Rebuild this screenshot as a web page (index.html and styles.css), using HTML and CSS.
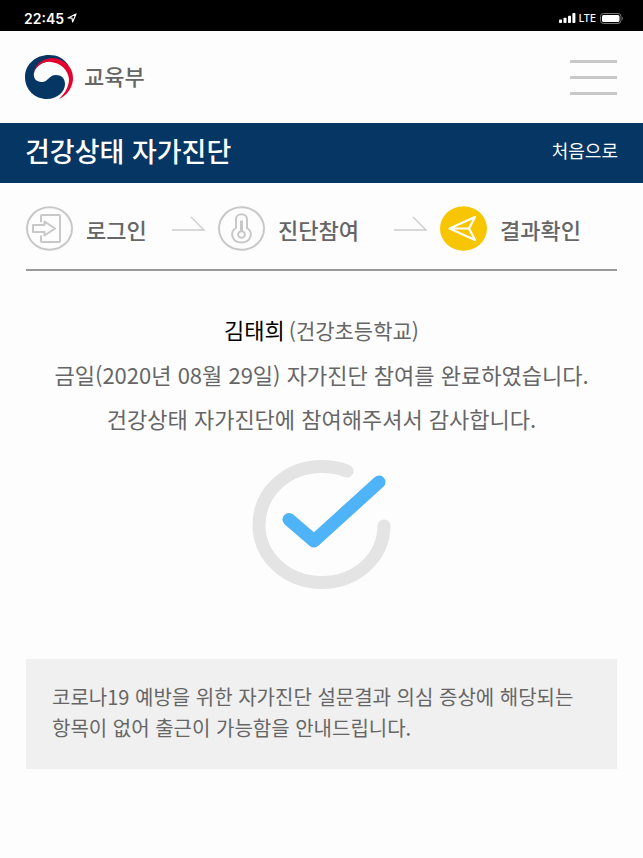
FILE: index.html
```html
<!DOCTYPE html>
<html lang="ko">
<head>
  <meta charset="UTF-8" />
  <meta name="viewport" content="width=device-width, initial-scale=1" />
  <title>건강상태 자가진단</title>
  <link rel="stylesheet" href="styles.css">
</head>
<body>

  <!-- Status bar -->
  <div class="status-bar">
    <span class="clock">22:45</span>
    <svg class="location" width="10" height="10" viewBox="0 0 10 10">
      <path d="M1 5 L9 1 L5.6 9 L5 5.2 Z" fill="none" stroke="#fff" stroke-width="1.2" stroke-linejoin="round"/>
    </svg>
    <svg class="signal" width="17" height="10" viewBox="0 0 17 10" fill="#fff">
      <rect x="0" y="6.5" width="3" height="3.5" rx="0.8"/>
      <rect x="4.5" y="4.8" width="3" height="5.2" rx="0.8"/>
      <rect x="9" y="2.8" width="3" height="7.2" rx="0.8"/>
      <rect x="13.4" y="0" width="3" height="10" rx="0.8"/>
    </svg>
    <span class="network">LTE</span>
    <svg width="24" height="11" viewBox="0 0 24 11">
      <rect x="0.5" y="0.5" width="20.5" height="10" rx="3" fill="none" stroke="#777"/>
      <rect x="2" y="2" width="17.5" height="7" rx="1.6" fill="#fff"/>
      <path d="M22.2 3.6 Q24 5.5 22.2 7.4 Z" fill="#777"/>
    </svg>
  </div>

  <header class="site-header">
    <a class="logo" href="#">
      <svg width="49" height="45" viewBox="0 0 49 45">
        <path d="M44 11 C39 3 32 0 24 0 C11 0 0 9 0 22 C0 35 10 44 22 44 C32 44 40 37 40 29 C40 23 36 20 31 20 C24 20 23 27 17 27 C11 27 8 23 9 18 C11 7 29 1 44 11 Z" fill="#063663"/>
        <path d="M9 17 C11 8 19 3 28 3 C40 4 49 13 48 25 C47 34 41 41 34 44 C41 37 44 31 44 24 C43 15 36 8 26 7 C19 6 12 10 9 17 Z" fill="#e4032e"/>
      </svg>
      <span>교육부</span>
    </a>
    <button class="menu-btn" type="button" aria-label="메뉴">
      <span></span><span></span><span></span>
    </button>
  </header>

  <div class="title-bar">
    <h1>건강상태 자가진단</h1>
    <a href="#">처음으로</a>
  </div>

  <main>
    <ol class="steps">
      <li>
        <svg class="step-icon" width="47" height="45" viewBox="0 0 47 45" fill="none" stroke="#c8c8c8" stroke-width="2">
          <ellipse cx="23.5" cy="22.5" rx="22.5" ry="21.3"/>
          <path d="M15 16 V9.5 Q15 9 16 9 H33 Q34 9 34 10 V35 Q34 36 33 36 H16 Q15 36 15 35 V29.5"/>
          <path d="M7 19 H18.5 V15.5 L29 22.5 L18.5 29.5 V26 H7 Z" stroke-linejoin="round"/>
        </svg>
        <span>로그인</span>
        <svg class="arrow" width="34" height="15" viewBox="0 0 34 15" fill="none" stroke="#ccc" stroke-width="1.4">
          <path d="M0 14 H32 L19 1"/>
        </svg>
      </li>
      <li>
        <svg class="step-icon" width="47" height="45" viewBox="0 0 47 45" fill="none" stroke="#c8c8c8" stroke-width="2">
          <ellipse cx="23.5" cy="22.5" rx="22.5" ry="21.3"/>
          <path d="M18 22 V13.5 C18 6.5 29 6.500 29 13.5 V22 C36 26 33 36.500 23.5 36.500 C14 36.500 11 26 18 22 Z"/>
          <ellipse cx="23.5" cy="28.5" rx="3.4" ry="3.2"/>
          <path d="M23.5 14.5 V25" stroke-width="3"/>
        </svg>
        <span>진단참여</span>
        <svg class="arrow" width="34" height="15" viewBox="0 0 34 15" fill="none" stroke="#ccc" stroke-width="1.4">
          <path d="M0 14 H32 L19 1"/>
        </svg>
      </li>
      <li>
        <svg class="step-icon" width="47" height="45" viewBox="0 0 47 45">
          <ellipse cx="23.5" cy="22.5" rx="23.5" ry="22.2" fill="#f7c600"/>
          <path d="M9.5 22.5 L35 11 L29 22.5 L35 34 Z M9.5 22.5 H29" fill="none" stroke="#fff" stroke-width="2.2" stroke-linejoin="round"/>
        </svg>
        <span>결과확인</span>
      </li>
    </ol>

    <section class="result">
      <p><strong>김태희</strong><span class="school">(건강초등학교)</span></p>
      <p>금일(2020년 08월 29일) 자가진단 참여를 완료하였습니다.</p>
      <p>건강상태 자가진단에 참여해주셔서 감사합니다.</p>
      <svg class="check" width="140" height="130" viewBox="0 0 140 130" fill="none" stroke-linecap="round" stroke-linejoin="round">
        <path d="M95 11 C86 7.5 78 6.5 70 6.5 C35 6.5 7 32 7 65 C7 97 35 122.5 70 122.5 C104 122.5 131.5 98 132 66" stroke="#e4e4e4" stroke-width="13"/>
        <path d="M37 59.5 L62 81 L127 22" stroke="#4fb3f7" stroke-width="13"/>
      </svg>
    </section>

    <p class="notice">코로나19 예방을 위한 자가진단 설문결과 의심 증상에 해당되는 항목이 없어 출근이 가능함을 안내드립니다.</p>
  </main>

</body>
</html>
```

FILE: styles.css
```css
* {
  box-sizing: border-box;
}

body {
  margin: 0;
  background: #fdfdfd;
  color: #666;
  font-family: "Noto Sans CJK KR", sans-serif;
  word-break: keep-all;
}

a {
  color: inherit;
  text-decoration: none;
}

.status-bar {
  display: flex;
  align-items: center;
  height: 31px;
  padding: 5px 19px 0 24px;
  background: #000;
  color: #fff;
  font-family: Inter, sans-serif;
}

.clock {
  font-size: 14px;
  font-weight: 600;
}

.location {
  margin-left: 3px;
}

.signal {
  margin-left: auto;
}

.network {
  margin: 0 4px 0 3px;
  font-size: 10px;
  font-weight: 500;
}

.site-header {
  display: flex;
  align-items: center;
  justify-content: space-between;
  height: 92px;
  padding: 0 26px 0 25px;
}

.logo {
  display: flex;
  align-items: center;
  gap: 10px;
  font-size: 22px;
  font-weight: 500;
  line-height: 32px;
}

.logo span {
  padding-bottom: 4px;
}

.menu-btn {
  display: flex;
  flex-direction: column;
  gap: 13px;
  width: 47px;
  padding: 0;
  border: none;
  background: none;
  cursor: pointer;
}

.menu-btn span {
  height: 3px;
  background: #c8c8c8;
}

.title-bar {
  display: flex;
  align-items: center;
  justify-content: space-between;
  height: 60px;
  padding: 0 25px 6px;
  background: #063663;
  color: #fff;
}

.title-bar h1 {
  margin: 0;
  font-size: 27px;
  font-weight: 500;
}

.title-bar a {
  font-size: 18px;
}

main {
  padding: 0 26px;
}

.steps {
  display: grid;
  grid-template-columns: 192fr 222fr 177fr;
  margin: 0;
  padding: 23px 0 18px;
  border-bottom: 2px solid #999;
  list-style: none;
}

.steps li {
  display: flex;
  align-items: center;
  font-size: 22px;
  font-weight: 500;
  line-height: 44px;
}

.step-icon {
  margin-right: 13px;
}

.arrow {
  margin: 0 12px 10px auto;
}

.result {
  padding-top: 36px;
  text-align: center;
  font-size: 22px;
  line-height: 44px;
}

.result p {
  margin: 0;
}

.result strong {
  color: #000;
  font-weight: 400;
}

.school {
  margin-left: 4px;
  font-size: 21px;
}

.check {
  display: block;
  margin: 20px auto 69px;
}

.notice {
  margin: 0;
  padding: 22px 26px 26px;
  background: #f0f0f0;
  font-size: 20px;
  line-height: 31px;
}
```
